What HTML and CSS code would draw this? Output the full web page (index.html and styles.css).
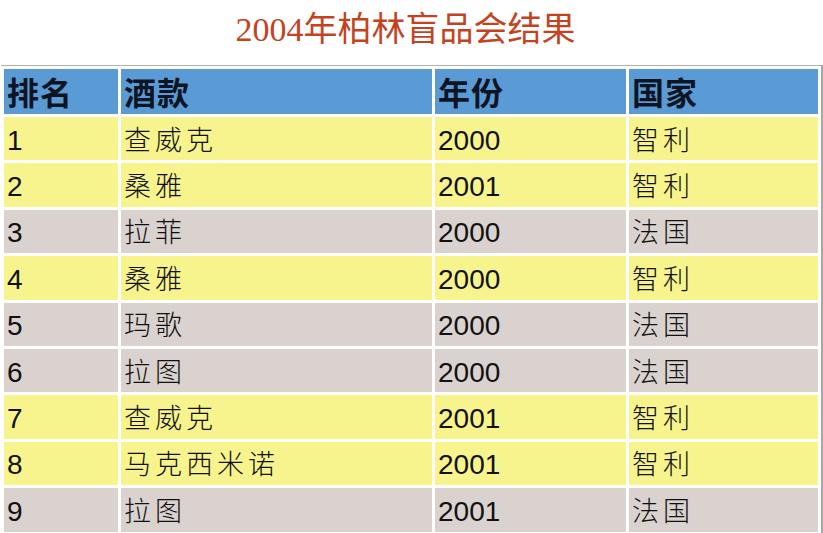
FILE: index.html
```html
<!DOCTYPE html>
<html lang="zh">
<head>
<meta charset="utf-8">
<title>2004年柏林盲品会结果</title>
<link rel="stylesheet" href="styles.css">
</head>
<body>
<h1 class="title">2004年柏林盲品会结果</h1>
<table class="results">
  <colgroup>
    <col class="c1"><col class="c2"><col class="c3"><col class="c4">
  </colgroup>
  <thead>
    <tr><th>排名</th><th>酒款</th><th>年份</th><th>国家</th></tr>
  </thead>
  <tbody>
    <tr class="y"><td class="num">1</td><td class="zh">查威克</td><td class="num">2000</td><td class="zh">智利</td></tr>
    <tr class="y"><td class="num">2</td><td class="zh">桑雅</td><td class="num">2001</td><td class="zh">智利</td></tr>
    <tr class="g"><td class="num">3</td><td class="zh">拉菲</td><td class="num">2000</td><td class="zh">法国</td></tr>
    <tr class="y"><td class="num">4</td><td class="zh">桑雅</td><td class="num">2000</td><td class="zh">智利</td></tr>
    <tr class="g"><td class="num">5</td><td class="zh">玛歌</td><td class="num">2000</td><td class="zh">法国</td></tr>
    <tr class="g"><td class="num">6</td><td class="zh">拉图</td><td class="num">2000</td><td class="zh">法国</td></tr>
    <tr class="y"><td class="num">7</td><td class="zh">查威克</td><td class="num">2001</td><td class="zh">智利</td></tr>
    <tr class="y"><td class="num">8</td><td class="zh">马克西米诺</td><td class="num">2001</td><td class="zh">智利</td></tr>
    <tr class="g"><td class="num">9</td><td class="zh">拉图</td><td class="num">2001</td><td class="zh">法国</td></tr>
  </tbody>
</table>
</body>
</html>
```
FILE: styles.css
```css
html, body {
  margin: 0;
  padding: 0;
  background: #ffffff;
}
body {
  width: 823px;
  height: 533px;
  overflow: hidden;
}
.title {
  margin: 0;
  height: 65px;
  padding: 10px 12px 0 0;
  box-sizing: border-box;
  text-align: center;
  font-family: "Liberation Serif", "Noto Sans CJK SC", serif;
  font-weight: normal;
  font-size: 34px;
  line-height: 40px;
  color: #c4431f;
}
.results {
  margin-left: 1px;
  border-collapse: separate;
  border-spacing: 3px;
  table-layout: fixed;
  border-top: 1px solid #b5b2ae;
  border-right: 2px solid #a9a6a3;
  background: #ffffff;
}
.c1 { width: 114px; }
.c2 { width: 311px; }
.c3 { width: 191px; }
.c4 { width: 189px; }
.results th,
.results td {
  padding: 0 0 0 3px;
  text-align: left;
  vertical-align: middle;
  white-space: nowrap;
  overflow: hidden;
}
.results thead tr { height: 45px; }
.results tbody tr { height: 43.4px; }
.results th {
  background: #5b9bd5;
  color: #0d1524;
  font-family: "Noto Sans CJK SC", sans-serif;
  font-weight: bold;
  font-size: 32px;
  letter-spacing: 1px;
  line-height: 45px;
}
.results td {
  color: #111111;
}
.results td.num {
  padding-top: 4px;
  font-family: "Liberation Sans", sans-serif;
  font-size: 28px;
  line-height: 38px;
}
.results td.zh {
  font-family: "Noto Sans CJK SC", sans-serif;
  font-weight: 300;
  font-size: 27px;
  line-height: 42px;
  letter-spacing: 4px;
}
.results tr.y td { background: #f8f48d; }
.results tr.g td { background: #dad2cf; }
```
